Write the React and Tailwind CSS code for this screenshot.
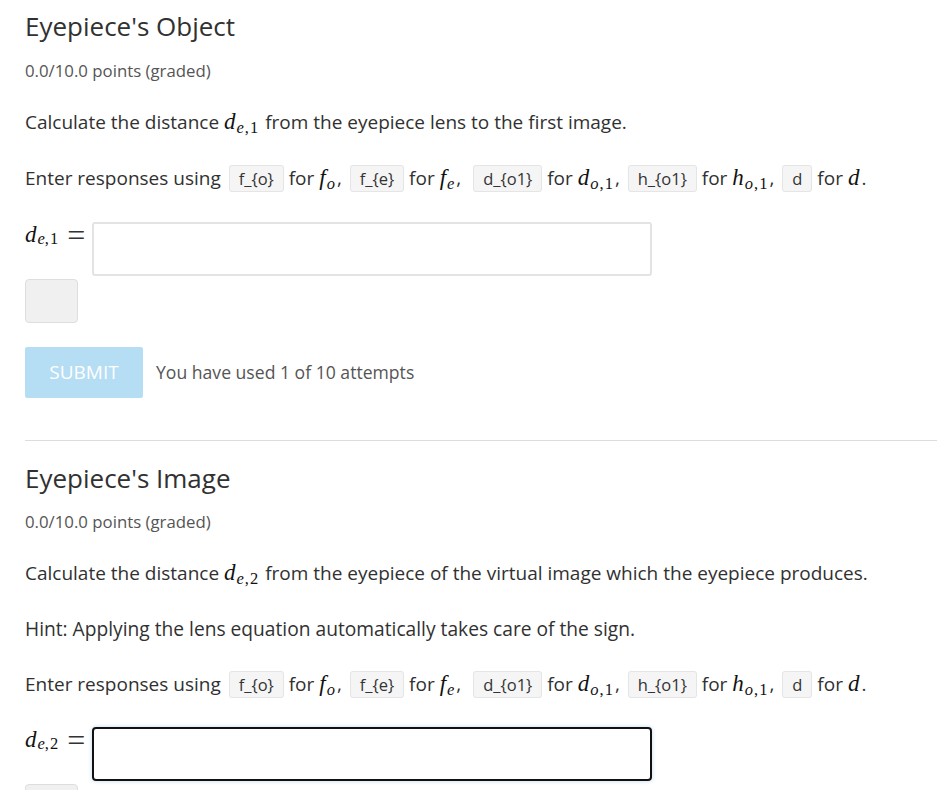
const sans = { fontFamily: '"Open Sans", "Noto Sans", sans-serif' };

function Sub({ parts }) {
  return (
    <span className="text-[16.5px] relative top-[4px] ml-[1px]">
      {parts.map((p, i) =>
        p.i ? <i key={i}>{p.t}</i> : <span key={i} className="ml-[1px]">{p.t}</span>
      )}
    </span>
  );
}

function Chip({ children }) {
  return (
    <code className="font-['Open_Sans',sans-serif] text-[16.5px] text-[#333] bg-[#f5f5f5] border border-[#e5e5e5] rounded-[3px] px-[9px] py-[1px] ml-[3px]">
      {children}
    </code>
  );
}

function Sym({ b, s }) {
  return (
    <span className="font-['Liberation_Serif',serif] text-[23px] text-[#111] whitespace-nowrap mr-[2px]">
      <i>{b}</i>
      {s && <Sub parts={s} />}
    </span>
  );
}

function EnterLine() {
  return (
    <p className="h-[30px] text-[19px] text-[#313131] leading-[30px] whitespace-nowrap">
      Enter responses using <Chip>f_{"{o}"}</Chip> for <Sym b="f" s={[{ t: "o", i: true }]} />,
      {" "}<Chip>f_{"{e}"}</Chip> for <Sym b="f" s={[{ t: "e", i: true }]} />,<span className="mr-[4px]" />
      {" "}<Chip>d_{"{o1}"}</Chip> for <Sym b="d" s={[{ t: "o", i: true }, { t: "," }, { t: "1" }]} />,
      {" "}<Chip>h_{"{o1}"}</Chip> for <Sym b="h" s={[{ t: "o", i: true }, { t: "," }, { t: "1" }]} />,
      {" "}<Chip>d</Chip> for <Sym b="d" />.
    </p>
  );
}

function AnswerRow({ n, focused }) {
  return (
    <div className="flex items-start">
      <div className="w-[67px] h-[30px] -mt-[2px] flex items-center leading-[30px] font-['Liberation_Serif',serif] text-[23px] text-[#111]">
        <i>d</i>
        <span className="text-[16.5px] relative top-[4px] ml-[1px]"><i>e</i>,<span className="ml-[1px]">{n}</span></span>
        <span className="ml-[9px] text-[32px] leading-[30px] text-[#333]">=</span>
      </div>
      <div
        className={
          focused
            ? "w-[560px] h-[54px] rounded-[4px] border-2 border-[#111] shadow-[0_0_4px_#bcd8f0]"
            : "w-[560px] h-[54px] rounded-[3px] border-2 border-[#e3e3e3] bg-white"
        }
      />
    </div>
  );
}

export default function App() {
  return (
    <div style={sans} className="bg-white min-h-screen pl-[25px] overflow-hidden">
      <h2 className="text-[26px] text-[#313131] leading-[34px] pt-[9px]">Eyepiece's Object</h2>
      <div className="text-[16.8px] text-[#555] mt-[16px] leading-[24px]">0.0/10.0 points (graded)</div>
      <p className="h-[30px] text-[19px] text-[#313131] mt-[24px] leading-[30px]">
        Calculate the distance <Sym b="d" s={[{ t: "e", i: true }, { t: "," }, { t: "1" }]} /> from the eyepiece lens to the first image.
      </p>
      <div className="mt-[26px]">
        <EnterLine />
      </div>
      <div className="mt-[29px]">
        <AnswerRow n="1" />
      </div>
      <div className="mt-[3px] w-[53px] h-[44px] rounded-[4px] bg-[#f0f0f0] border border-[#dedede]" />
      <div className="mt-[24px] flex items-center">
        <button className="w-[118px] h-[51px] bg-[#b5ddf4] text-white text-[19px] rounded-[2px]">SUBMIT</button>
        <span className="ml-[13px] text-[17.6px] text-[#555]">You have used 1 of 10 attempts</span>
      </div>
      <div className="mt-[42px] border-t border-[#dddddd]" />
      <h2 className="text-[26px] text-[#313131] leading-[34px] mt-[20px]">Eyepiece's Image</h2>
      <div className="text-[16.8px] text-[#555] mt-[15px] leading-[24px]">0.0/10.0 points (graded)</div>
      <p className="h-[30px] text-[19px] text-[#313131] mt-[24px] leading-[30px]">
        Calculate the distance <Sym b="d" s={[{ t: "e", i: true }, { t: "," }, { t: "2" }]} /> from the eyepiece of the virtual image which the eyepiece produces.
      </p>
      <p className="h-[30px] text-[19.2px] text-[#313131] mt-[26px] leading-[30px]">
        Hint: Applying the lens equation automatically takes care of the sign.
      </p>
      <div className="mt-[25px]">
        <EnterLine />
      </div>
      <div className="mt-[28px]">
        <AnswerRow n="2" focused />
      </div>
      <div className="mt-[3px] w-[53px] h-[44px] rounded-[4px] bg-[#f0f0f0] border border-[#dedede]" />
    </div>
  );
}
